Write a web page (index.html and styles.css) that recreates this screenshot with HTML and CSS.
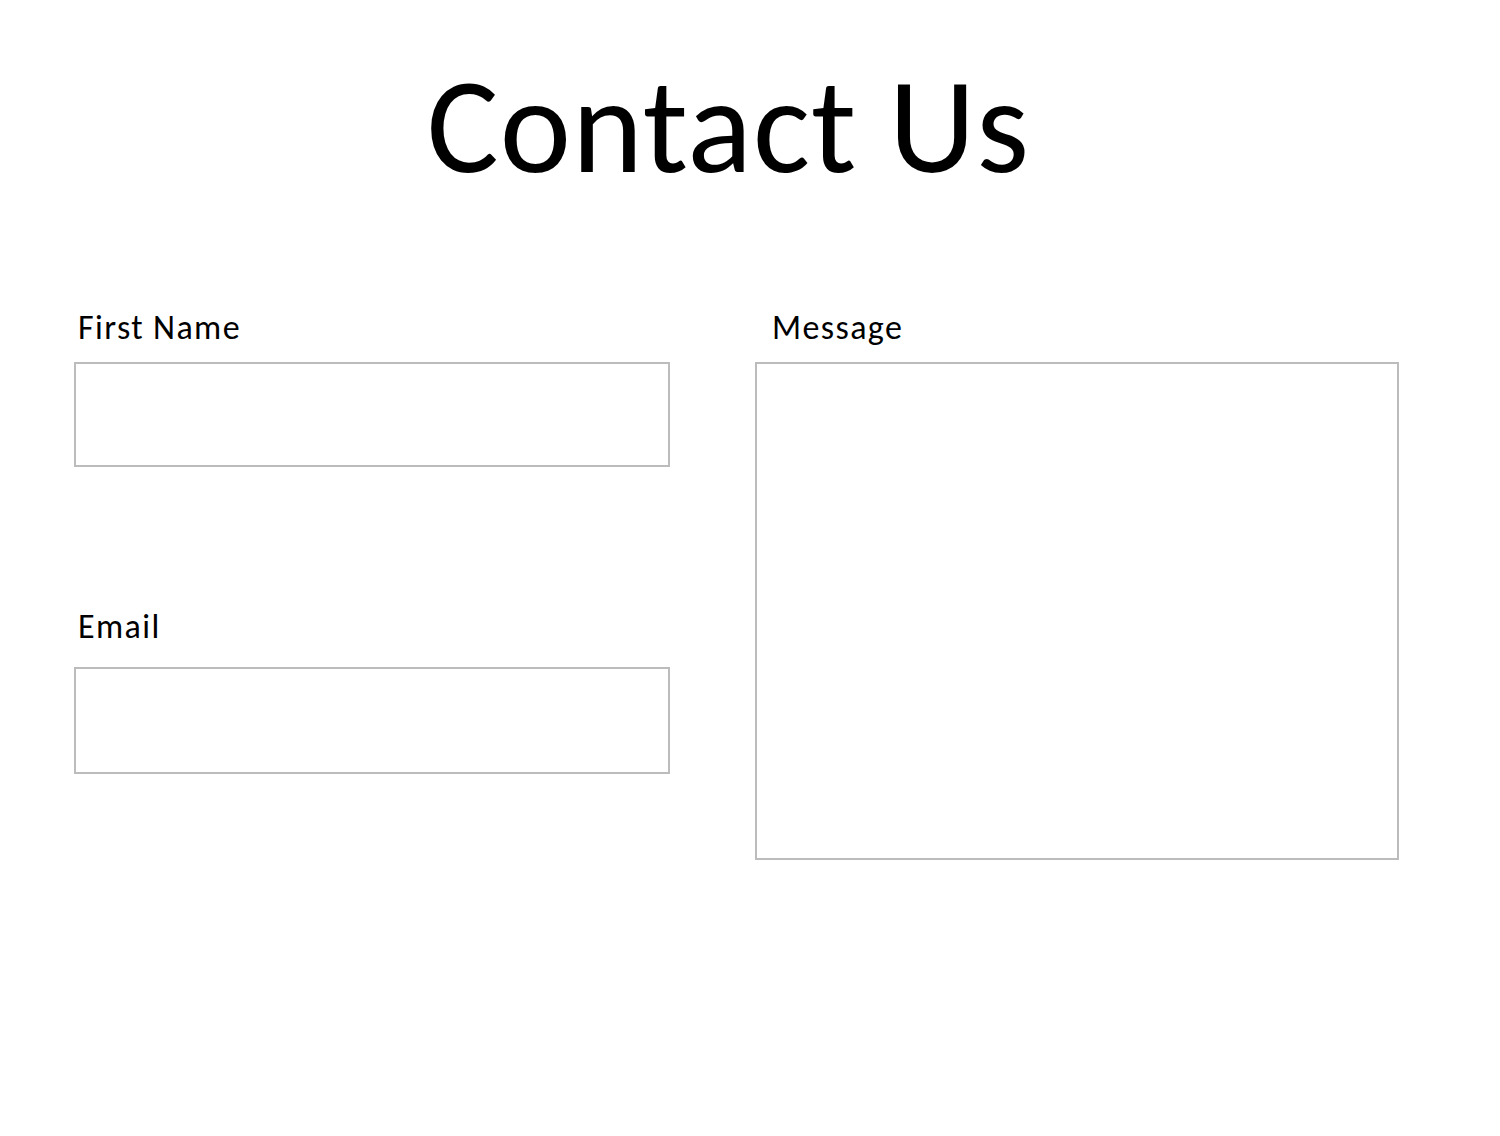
FILE: index.html
```html
<!DOCTYPE html>
<html lang="en">
<head>
<meta charset="utf-8">
<title>Contact Us</title>
<link rel="stylesheet" href="styles.css">
</head>
<body>
<main class="slide">
  <h1 class="title">Contact Us</h1>
  <form class="form">
    <div class="col col-left">
      <div class="field">
        <label class="label">First Name</label>
        <div class="box box-input"></div>
      </div>
      <div class="field field-email">
        <label class="label label-email">Email</label>
        <div class="box box-email"></div>
      </div>
    </div>
    <div class="col col-right">
      <label class="label label-msg">Message</label>
      <div class="box box-msg"></div>
    </div>
  </form>
</main>
</body>
</html>
```
FILE: styles.css
```css
html, body {
  margin: 0;
  padding: 0;
  background: #ffffff;
}
body {
  font-family: Carlito, "Open Sans", "Noto Sans", sans-serif;
  color: #000000;
}
.slide {
  width: 1500px;
  height: 1136px;
  padding-top: 46px;
  box-sizing: border-box;
}
.title {
  margin: 0;
  font-weight: 400;
  font-size: 135px;
  line-height: 160px;
  letter-spacing: 1px;
  text-align: center;
  padding-right: 43px;
}
.form {
  display: flex;
  margin-top: 102px;
  padding-left: 74px;
  gap: 85px;
}
.col {
  display: flex;
  flex-direction: column;
}
.col-left {
  width: 596px;
}
.col-right {
  width: 644px;
}
.field {
  display: flex;
  flex-direction: column;
}
.field-email {
  margin-top: 140px;
}
.label {
  font-size: 34px;
  line-height: 40px;
  letter-spacing: 1.4px;
  padding-left: 4px;
  margin-bottom: 14px;
}
.label-email {
  margin-bottom: 20px;
}
.label-msg {
  padding-left: 17px;
}
.box {
  border: 2px solid #bcbcbc;
  box-sizing: border-box;
}
.box-input {
  height: 105px;
}
.box-email {
  height: 107px;
}
.box-msg {
  height: 498px;
}
```
